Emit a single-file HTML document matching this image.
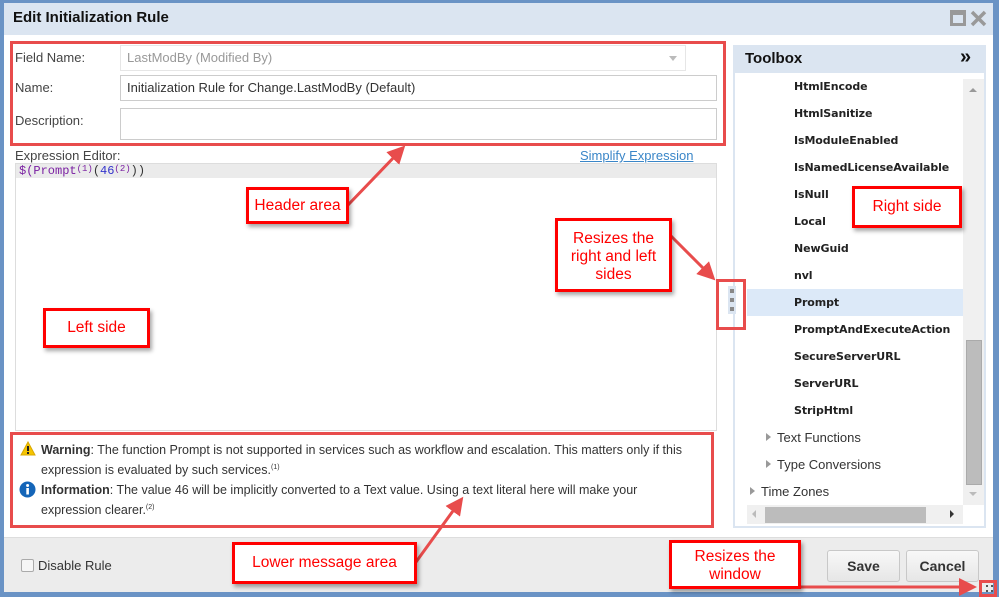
<!DOCTYPE html>
<html><head><style>
*{box-sizing:border-box;margin:0;padding:0}
body{width:999px;height:597px;overflow:hidden;position:relative;background:#6a93c5;font-family:"Liberation Sans",Arial,sans-serif;font-size:13px;color:#333}
.a{position:absolute}
.inp{position:absolute;border:1px solid #ccc;background:#fff;font-size:13px;padding:0 6px;line-height:24px;color:#333}
.lbl{position:absolute;left:15px;font-size:13px;color:#444}
.it{position:absolute;left:794px;font-weight:bold;font-size:11px;color:#222;font-family:"DejaVu Sans",sans-serif;letter-spacing:-0.1px}
.grp{position:absolute;font-size:13px;color:#333}
.tri{display:inline-block;width:0;height:0;border-left:5px solid #999;border-top:4px solid transparent;border-bottom:4px solid transparent;margin-right:6px;vertical-align:1px}
.ann{position:absolute;border:3px solid #f00;background:#fff;color:#f00;font-size:15.5px;text-align:center;box-shadow:2px 3px 4px rgba(0,0,0,.35)}
.btn{position:absolute;border:1px solid #c8c8c8;border-radius:3px;background:linear-gradient(#f8f8f8,#e6e6e6);font-weight:bold;font-size:14px;text-align:center;line-height:30px;color:#333}
</style></head><body>
<div class="a" style="left:4px;top:3px;width:989px;height:589px;background:#fff"></div>
<div class="a" style="left:4px;top:3px;width:989px;height:32px;background:#dbe5f1"></div>
<div class="a" style="left:13px;top:9px;font-weight:bold;font-size:15px;color:#111">Edit Initialization Rule</div>
<div class="a" style="left:950px;top:10px;width:16px;height:16px;border:3px solid #999;border-top-width:5px"></div>
<svg class="a" style="left:970px;top:10px" width="17" height="17"><path d="M2 2L15 15M15 2L2 15" stroke="#999" stroke-width="3.5"/></svg>

<div class="lbl" style="top:50px">Field Name:</div>
<div class="inp" style="left:120px;top:45px;width:566px;height:26px;color:#999;border-color:#e6e6e6">LastModBy (Modified By)</div>
<div class="a" style="left:669px;top:56px;border-top:5px solid #bbb;border-left:4px solid transparent;border-right:4px solid transparent"></div>
<div class="lbl" style="top:80px">Name:</div>
<div class="inp" style="left:120px;top:75px;width:597px;height:26px">Initialization Rule for Change.LastModBy (Default)</div>
<div class="lbl" style="top:113px">Description:</div>
<div class="inp" style="left:120px;top:108px;width:597px;height:32px"></div>
<div class="a" style="left:10px;top:41px;width:716px;height:105px;border:3px solid #e84c4c"></div>

<div class="lbl" style="top:148px">Expression Editor:</div>
<div class="a" style="left:580px;top:148px;color:#3a86c8;text-decoration:underline">Simplify Expression</div>
<div class="a" style="left:15px;top:163px;width:702px;height:268px;border:1px solid #ddd;background:#fff"></div>
<div class="a" style="left:16px;top:164px;width:700px;height:14px;background:#ebebeb"></div>
<div class="a" style="left:19px;top:164px;font-family:'Liberation Mono',monospace;font-size:12px;color:#7a1fa2">$(Prompt<span style="font-size:9px;vertical-align:3px">(1)</span><span style="color:#333">(</span><span style="color:#3333cc">46</span><span style="font-size:9px;vertical-align:3px">(2)</span><span style="color:#333">))</span></div>

<div class="a" style="left:10px;top:432px;width:704px;height:96px;border:3px solid #e84c4c"></div>
<svg class="a" style="left:20px;top:441px" width="16" height="15"><path d="M8 1L15 14H1Z" fill="#f5c400" stroke="#d9a800"/><rect x="7" y="5" width="2" height="5" fill="#222"/><rect x="7" y="11" width="2" height="2" fill="#222"/></svg>
<div class="a" style="left:41px;top:441px;width:665px;line-height:18px;font-size:12.5px;color:#333"><b>Warning</b>: The function Prompt is not supported in services such as workflow and escalation. This matters only if this expression is evaluated by such services.<sup style="font-size:7px">(1)</sup></div>
<svg class="a" style="left:19px;top:481px" width="17" height="17"><circle cx="8.5" cy="8.5" r="8" fill="#1465b8"/><rect x="7.3" y="7" width="2.6" height="6.5" fill="#fff"/><circle cx="8.6" cy="4.5" r="1.5" fill="#fff"/></svg>
<div class="a" style="left:41px;top:481px;width:645px;line-height:18px;font-size:12.5px;color:#333"><b>Information</b>: The value 46 will be implicitly converted to a Text value. Using a text literal here will make your expression clearer.<sup style="font-size:7px">(2)</sup></div>

<div class="a" style="left:733px;top:45px;width:253px;height:483px;border:2px solid #dbe5f1;border-top:none;background:#fff"></div>
<div class="a" style="left:733px;top:45px;width:253px;height:28px;background:#dbe5f1"></div>
<div class="a" style="left:745px;top:50px;font-weight:bold;font-size:15px;color:#111">Toolbox</div>
<div class="a" style="left:960px;top:46px;font-weight:bold;font-size:20px;color:#111">»</div>
<div class="a" style="left:747px;top:289px;width:216px;height:27px;background:#dce9f8"></div>
<div class="it" style="top:80px">HtmlEncode</div>
<div class="it" style="top:107px">HtmlSanitize</div>
<div class="it" style="top:134px">IsModuleEnabled</div>
<div class="it" style="top:161px">IsNamedLicenseAvailable</div>
<div class="it" style="top:188px">IsNull</div>
<div class="it" style="top:215px">Local</div>
<div class="it" style="top:242px">NewGuid</div>
<div class="it" style="top:269px">nvl</div>
<div class="it" style="top:296px">Prompt</div>
<div class="it" style="top:323px">PromptAndExecuteAction</div>
<div class="it" style="top:350px">SecureServerURL</div>
<div class="it" style="top:377px">ServerURL</div>
<div class="it" style="top:404px">StripHtml</div>
<div class="grp" style="left:766px;top:430px"><span class="tri"></span>Text Functions</div>
<div class="grp" style="left:766px;top:457px"><span class="tri"></span>Type Conversions</div>
<div class="grp" style="left:750px;top:484px"><span class="tri"></span>Time Zones</div>
<div class="a" style="left:963px;top:79px;width:21px;height:426px;background:#f0f0f0"></div>
<div class="a" style="left:966px;top:340px;width:16px;height:145px;background:#bcbcbc;border:1px solid #aaa"></div>
<div class="a" style="left:969px;top:88px;border-bottom:4px solid #999;border-left:4px solid transparent;border-right:4px solid transparent"></div>
<div class="a" style="left:969px;top:492px;border-top:4px solid #bbb;border-left:4px solid transparent;border-right:4px solid transparent"></div>
<div class="a" style="left:747px;top:505px;width:216px;height:19px;background:#f0f0f0"></div>
<div class="a" style="left:765px;top:507px;width:161px;height:16px;background:#bcbcbc"></div>
<div class="a" style="left:752px;top:510px;border-right:4px solid #bbb;border-top:4px solid transparent;border-bottom:4px solid transparent"></div>
<div class="a" style="left:950px;top:510px;border-left:4px solid #333;border-top:4px solid transparent;border-bottom:4px solid transparent"></div>

<div class="a" style="left:728px;top:286px;width:8px;height:28px;background:#dbe5f1"></div>
<div class="a" style="left:730px;top:289px;width:4px;height:4px;background:#888"></div>
<div class="a" style="left:730px;top:298px;width:4px;height:4px;background:#888"></div>
<div class="a" style="left:730px;top:307px;width:4px;height:4px;background:#888"></div>
<div class="a" style="left:716px;top:279px;width:30px;height:51px;border:3px solid #e84c4c"></div>

<div class="a" style="left:4px;top:537px;width:989px;height:55px;background:#ececec;border-top:1px solid #ddd"></div>
<div class="a" style="left:21px;top:559px;width:13px;height:13px;border:1px solid #aaa;border-radius:2px;background:#f6f6f6"></div>
<div class="a" style="left:38px;top:558px;color:#333">Disable Rule</div>
<div class="btn" style="left:827px;top:550px;width:73px;height:32px">Save</div>
<div class="btn" style="left:906px;top:550px;width:73px;height:32px">Cancel</div>
<div class="a" style="left:979px;top:580px;width:18px;height:17px;border:3px solid #e84c4c"></div>
<div class="a" style="left:986px;top:585px;width:2px;height:2px;background:#555"></div>
<div class="a" style="left:991px;top:585px;width:2px;height:2px;background:#555"></div>
<div class="a" style="left:986px;top:590px;width:2px;height:2px;background:#555"></div>
<div class="a" style="left:991px;top:590px;width:2px;height:2px;background:#555"></div>

<svg class="a" style="left:0;top:0" width="999" height="597">
<defs><marker id="m" markerWidth="6" markerHeight="6" refX="3" refY="3" orient="auto"><path d="M0 0L6 3L0 6Z" fill="#e84c4c"/></marker></defs>
<g stroke="#e84c4c" stroke-width="3" fill="none" marker-end="url(#m)">
<path d="M348 205L399 152"/><path d="M671 236L709 274"/><path d="M416 562L458 504"/><path d="M800 587L968 587"/>
</g></svg>

<div class="ann" style="left:246px;top:187px;width:103px;height:37px;line-height:31px">Header area</div>
<div class="ann" style="left:555px;top:218px;width:117px;height:74px;line-height:18px;padding-top:9px">Resizes the<br>right and left<br>sides</div>
<div class="ann" style="left:43px;top:308px;width:107px;height:40px;line-height:34px">Left side</div>
<div class="ann" style="left:852px;top:186px;width:110px;height:42px;line-height:36px">Right side</div>
<div class="ann" style="left:232px;top:542px;width:185px;height:42px;line-height:36px">Lower message area</div>
<div class="ann" style="left:669px;top:540px;width:132px;height:49px;line-height:18px;padding-top:5px">Resizes the<br>window</div>
</body></html>
